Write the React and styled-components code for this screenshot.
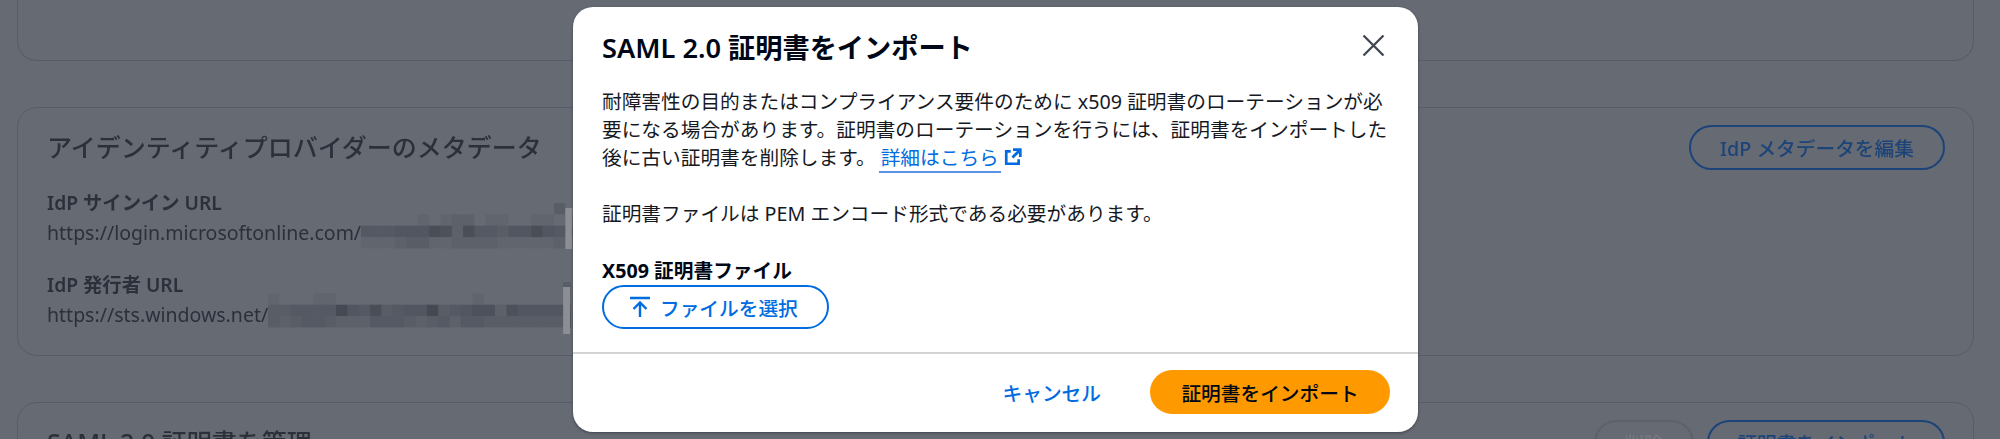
import React from 'react'
import styled, { createGlobalStyle } from 'styled-components'

const GlobalStyle = createGlobalStyle`
  html, body {
    margin: 0;
    padding: 0;
    background: #666a73;
  }
  * {
    box-sizing: border-box;
  }
`

const Page = styled.div`
  position: relative;
  width: 2000px;
  height: 439px;
  overflow: hidden;
  background: #666a73;
  font-family: "Noto Sans", "Noto Sans CJK JP", sans-serif;
`

// everything behind the dialog, already dimmed by the overlay
const Backdrop = styled.div`
  display: flex;
  flex-direction: column;
  gap: 46px;
  padding: 0 26px 0 17px;
  filter: blur(0.4px);
`

const Card = styled.section`
  display: flex;
  justify-content: space-between;
  align-items: flex-start;
  height: ${props => props.$height}px;
  padding: 17px 28px 0 29px;
  border: 1.5px solid #585c68;
  border-radius: 20px;
`

const TopCard = styled(Card)`
  border-top: none;
  border-radius: 0 0 20px 20px;
`

const CardBody = styled.div`
  display: flex;
  flex-direction: column;
  min-width: 0;
`

const CardTitle = styled.h2`
  margin: 0;
  padding-top: 4px;
  font-size: 25px;
  line-height: 36px;
  font-weight: 500;
  color: #2b303b;
  white-space: nowrap;
`

const FieldName = styled.div`
  margin-top: ${props => props.$top}px;
  font-size: 19.3px;
  line-height: 28px;
  font-weight: 600;
  color: #2b303b;
`

const FieldValue = styled.div`
  display: flex;
  align-items: flex-start;
  height: 28px;
  margin-top: 2px;
  font-size: 19.5px;
  line-height: 28px;
  color: #2b303b;
  white-space: nowrap;
`

const Mosaic = styled.svg`
  flex: none;
  margin-top: ${props => props.$top}px;
`

const Actions = styled.div`
  display: flex;
  gap: 13px;
`

const OutlineButton = styled.div`
  display: flex;
  justify-content: center;
  align-items: center;
  width: ${props => props.$width}px;
  height: 45px;
  border: 2.5px solid ${props => (props.$disabled ? '#5e616a' : '#1c4478')};
  border-radius: 23px;
  font-size: 19.7px;
  font-weight: 500;
  color: ${props => (props.$disabled ? '#74777d' : '#1c4478')};
`

const Modal = styled.div`
  position: absolute;
  top: 7px;
  left: 573px;
  display: flex;
  flex-direction: column;
  width: 845px;
  height: 425px;
  border-radius: 20px;
  background: #fff;
  color: #000716;
  box-shadow: 0 1px 3px rgba(0, 7, 22, 0.4);
`

const ModalHeader = styled.header`
  display: flex;
  justify-content: space-between;
  align-items: center;
  height: 81px;
  padding: 0 33px 4px 29px;
`

const ModalTitle = styled.h1`
  margin: 0;
  font-size: 27.2px;
  font-weight: 600;
`

const ModalContent = styled.div`
  flex: 1;
  padding: 0 29px;
`

const Text = styled.p`
  margin: 0 0 ${props => props.$bottom}px;
  font-size: 19.7px;
  line-height: 28px;
  color: #16191f;
`

const DocLink = styled.a`
  margin-left: 3px;
  padding: 0 2px;
  color: #006ce0;
  text-decoration: none;
  border-bottom: 2px solid #5b93e6;
`

const LinkIcon = styled.svg`
  margin-left: 3px;
  vertical-align: -1px;
`

const FileLabel = styled.div`
  font-size: 19.7px;
  line-height: 28px;
  font-weight: 700;
  color: #000716;
`

const FileButton = styled.div`
  display: flex;
  align-items: center;
  gap: 9px;
  width: 227px;
  height: 44px;
  padding-left: 25px;
  border: 2.5px solid #006ce0;
  border-radius: 22px;
  font-size: 19.7px;
  font-weight: 500;
  color: #006ce0;
`

const ModalFooter = styled.footer`
  display: flex;
  justify-content: flex-end;
  align-items: center;
  gap: 49px;
  height: 80px;
  padding: 0 28px 2px 0;
  border-top: 2px solid #d2d3d5;
`

const CancelLink = styled.span`
  font-size: 19.7px;
  font-weight: 500;
  color: #006ce0;
`

const PrimaryButton = styled.div`
  display: flex;
  justify-content: center;
  align-items: center;
  width: 240px;
  height: 44px;
  border-radius: 22px;
  background: #ff9900;
  font-size: 19.7px;
  font-weight: 500;
  color: #000716;
`

// redacted part of the urls, each number is how dark a tile is
const signInTiles = [
  [0, 0, 0, 0, 0, 0, 0, 0, 0, 0, 0, 0, 0, 0, 0, 0, 0, 3],
  [0, 0, 0, 0, 0, 1, 0, 1, 2, 2, 0, 1, 1, 0, 0, 1, 1, 0, 3],
  [4, 4, 4, 5, 5, 5, 7, 6, 2, 7, 4, 4, 3, 5, 5, 7, 5, 4, 8],
  [1, 1, 1, 2, 3, 3, 1, 1, 2, 2, 2, 2, 1, 1, 1, 1, 1, 2, 4],
]

const issuerTiles = [
  [0, 0, 0, 0, 0, 0, 0, 0, 0, 0, 0, 0, 0, 0, 0, 0, 0, 0, 0, 0, 0, 0, 0, 0, 0, 0, 3],
  [1, 0, 0, 0, 1, 1, 0, 0, 0, 0, 0, 0, 0, 0, 0, 0, 0, 0, 1, 0, 0, 0, 0, 0, 0, 0, 2],
  [3, 3, 4, 4, 4, 4, 8, 5, 4, 7, 3, 4, 5, 5, 8, 3, 4, 5, 6, 6, 2, 6, 5, 5, 5, 5, 6],
  [3, 2, 3, 4, 4, 3, 2, 2, 2, 4, 4, 4, 3, 2, 3, 4, 2, 4, 4, 3, 3, 3, 3, 3, 3, 3, 7],
]

const tileSize = 11.35

const RedactedText = ({ tiles, columns, top, height }) => (
  <Mosaic $top={top} width={columns * tileSize + 8} height={height}>
    {tiles.map((row, y) =>
      row.map((dark, x) =>
        dark > 0 ? (
          <rect
            key={`${x}-${y}`}
            x={x * tileSize}
            y={y * tileSize}
            width={tileSize}
            height={tileSize}
            fill="#2b303b"
            fillOpacity={dark * 0.07}
          />
        ) : null
      )
    )}
    <rect x={columns * tileSize} y={5} width={7} height={height - 5} fill="#8b8e94" />
  </Mosaic>
)

const CloseIcon = () => (
  <svg width="23" height="23" viewBox="0 0 23 23" fill="none" stroke="#414750" strokeWidth="2.3">
    <path d="M1.5 1.5l20 20M21.5 1.5l-20 20" />
  </svg>
)

const ExternalIcon = () => (
  <LinkIcon width="18" height="18" viewBox="0 0 16 16" fill="none" stroke="#006ce0" strokeWidth="2.4">
    <path d="M14.5 8V1.5H8M14.5 1.5L7.5 8.5" />
    <path d="M6 3H2v11h11v-4" />
  </LinkIcon>
)

const UploadIcon = () => (
  <svg width="22" height="22" viewBox="0 0 22 22" fill="none" stroke="#006ce0" strokeWidth="2.4">
    <path d="M1 2h20M11 21V7M4.5 13L11 6.5l6.5 6.5" />
  </svg>
)

const App = () => {
  return (
    <Page>
      <GlobalStyle />
      <Backdrop>
        <TopCard $height={61} />
        <Card $height={249}>
          <CardBody>
            <CardTitle>アイデンティティプロバイダーのメタデータ</CardTitle>
            <FieldName $top={24}>IdP サインイン URL</FieldName>
            <FieldValue>
              https://login.microsoftonline.com/
              <RedactedText tiles={signInTiles} columns={18} top={-16} height={46} />
            </FieldValue>
            <FieldName $top={24}>IdP 発行者 URL</FieldName>
            <FieldValue>
              https://sts.windows.net/
              <RedactedText tiles={issuerTiles} columns={26} top={-19} height={52} />
            </FieldValue>
          </CardBody>
          <OutlineButton $width={256}>IdP メタデータを編集</OutlineButton>
        </Card>
        <Card $height={120}>
          <CardTitle>SAML 2.0 証明書を管理</CardTitle>
          <Actions>
            <OutlineButton $width={100} $disabled>削除</OutlineButton>
            <OutlineButton $width={238}>証明書をインポート</OutlineButton>
          </Actions>
        </Card>
      </Backdrop>
      <Modal>
        <ModalHeader>
          <ModalTitle>SAML 2.0 証明書をインポート</ModalTitle>
          <CloseIcon />
        </ModalHeader>
        <ModalContent>
          <Text $bottom={28}>
            耐障害性の目的またはコンプライアンス要件のために x509 証明書のローテーションが必要になる場合があります。証明書のローテーションを行うには、証明書をインポートした後に古い証明書を削除します。
            <DocLink>詳細はこちら</DocLink>
            <ExternalIcon />
          </Text>
          <Text $bottom={29}>証明書ファイルは PEM エンコード形式である必要があります。</Text>
          <FileLabel>X509 証明書ファイル</FileLabel>
          <FileButton>
            <UploadIcon />
            ファイルを選択
          </FileButton>
        </ModalContent>
        <ModalFooter>
          <CancelLink>キャンセル</CancelLink>
          <PrimaryButton>証明書をインポート</PrimaryButton>
        </ModalFooter>
      </Modal>
    </Page>
  )
}

export default App
